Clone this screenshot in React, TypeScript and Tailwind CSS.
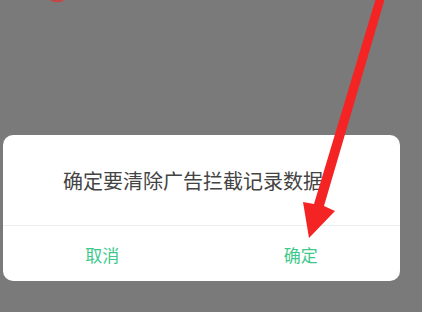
export default function App() {
  return (
    <div
      className="relative w-[422px] h-[312px] overflow-hidden bg-[#7a7a7a]"
      style={{ fontFamily: '"Noto Sans CJK SC", "Noto Sans", sans-serif' }}
    >
      <div className="pt-[135px] pl-[3px]">
        {/* Dialog */}
        <div className="w-[397px] h-[146px] bg-white rounded-[10px] flex flex-col">
          <div className="h-[90px] flex items-center pl-[60px] pt-[1px] text-[20px] leading-none text-[#444]">
            确定要清除广告拦截记录数据
          </div>
          <div className="h-px bg-[#eeeeee]" />
          <div className="flex-1 grid grid-cols-2 text-[17px] leading-none text-[#3dc98a]">
            <button className="flex items-center justify-center pt-[2px]">取消</button>
            <button className="flex items-center justify-center pt-[2px]">确定</button>
          </div>
        </div>
      </div>

      {/* red annotation arrow */}
      <svg className="absolute inset-0 pointer-events-none" width="422" height="312" viewBox="0 0 422 312">
        <path d="M50 -1 Q56 3 63 0" stroke="#f02a2a" strokeWidth="2" fill="none" opacity="0.7" />
        <polygon
          points="376,-2 385,-2 324,206 335,211 309,238 303,202 314,204"
          fill="#f52424"
        />
      </svg>
    </div>
  );
}
